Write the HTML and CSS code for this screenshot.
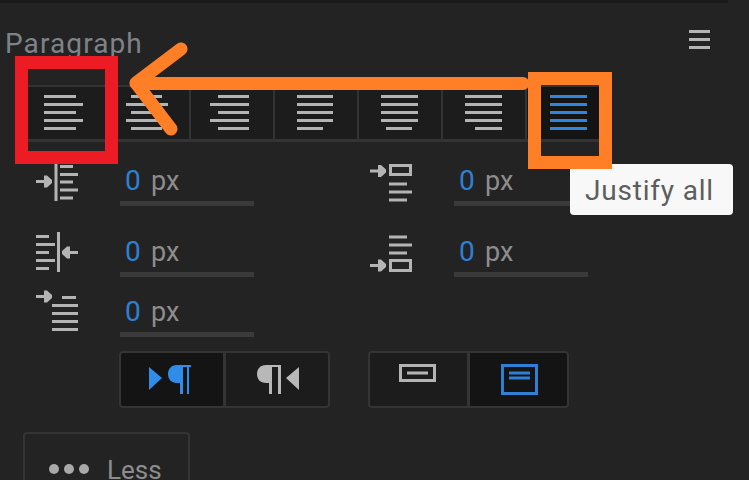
FILE: index.html
```html
<!DOCTYPE html>
<html lang="en">
<head>
<meta charset="utf-8">
<title>Paragraph</title>
<link rel="stylesheet" href="styles.css">
</head>
<body>
<div class="app">
  <div class="topbar"></div>
  <header class="header">
    <h1 class="title">Paragraph</h1>
    <button class="menu" aria-label="Panel menu"><span></span><span></span><span></span></button>
  </header>

  <div class="align-row">
    <div class="align-cell">
      <svg class="lines" viewBox="0 0 39 35"><path d="M0 1.5H32M0 9.5H39M0 17.5H32M0 25.5H39M0 33.5H32"/></svg>
    </div>
    <div class="align-cell">
      <svg class="lines" viewBox="0 0 42 35"><path d="M5 1.5H36M0 9.5H42M5 17.5H36M0 25.5H42M5 33.5H36"/></svg>
    </div>
    <div class="align-cell">
      <svg class="lines" viewBox="0 0 42 35"><path d="M8 1.5H39M0 9.5H39M8 17.5H39M0 25.5H39M8 33.5H39"/></svg>
    </div>
    <div class="align-cell">
      <svg class="lines" viewBox="0 0 36 35"><path d="M0 1.5H36M0 9.5H36M0 17.5H36M0 25.5H36M0 33.5H26"/></svg>
    </div>
    <div class="align-cell">
      <svg class="lines" viewBox="0 0 37 35"><path d="M0 1.5H37M0 9.5H37M0 17.5H37M0 25.5H37M5 33.5H31"/></svg>
    </div>
    <div class="align-cell">
      <svg class="lines" viewBox="0 0 37 35"><path d="M0 1.5H37M0 9.5H37M0 17.5H37M0 25.5H37M10 33.5H37"/></svg>
    </div>
    <div class="align-cell align-active">
      <svg class="lines lines-blue" viewBox="0 0 37 35"><path d="M0 1.5H37M0 9.5H37M0 17.5H37M0 25.5H37M0 33.5H37"/></svg>
    </div>
  </div>

  <div class="fields">
    <div class="field">
      <svg class="field-icon" viewBox="0 0 44 44"><path class="ln" d="M20 0V44M24 9.500H37M24 17.500H42M24 25H37M24 33H42M24 41H37"/><path class="ln" d="M0 24.500H10"/><path class="fill" d="M8 18.500H11L16 23V26L11 30.500H8Z"/></svg>
      <div class="value"><span class="num">0</span><span class="unit">px</span></div>
    </div>
    <div class="field">
      <svg class="field-icon" viewBox="0 0 44 44"><rect class="box" x="20.500" y="8.500" width="20" height="9"/><path class="ln" d="M0 14H10M19 27H37M19 35H42M19 43H37"/><path class="fill" d="M8 8H11L16 12.500V15.500L11 20H8Z"/></svg>
      <div class="value"><span class="num">0</span><span class="unit">px</span></div>
    </div>
    <div class="field">
      <svg class="field-icon" viewBox="0 0 44 44"><path class="ln" d="M0 8.500H13M0 16.500H19M0 24.500H13M0 32.500H19M0 40.500H13M22.500 4V44"/><path class="ln" d="M32 24.500H42"/><path class="fill" d="M34 18.500H31L26 23V26L31 30.500H34Z"/></svg>
      <div class="value"><span class="num">0</span><span class="unit">px</span></div>
    </div>
    <div class="field">
      <svg class="field-icon" viewBox="0 0 44 44"><path class="ln" d="M19 9H37M19 17H42M19 25H37"/><rect class="box" x="20.500" y="32.500" width="20" height="10"/><path class="ln" d="M0 37.500H10"/><path class="fill" d="M8 31.500H11L16 36V39L11 43.500H8Z"/></svg>
      <div class="value"><span class="num">0</span><span class="unit">px</span></div>
    </div>
    <div class="field">
      <svg class="field-icon" viewBox="0 0 44 44"><path class="ln" d="M0 8.500H10M26 9.500H40M16 17.500H42M16 25.500H42M16 33.500H42M16 41.500H42"/><path class="fill" d="M8 2.500H11L16 7V10L11 14.500H8Z"/></svg>
      <div class="value"><span class="num">0</span><span class="unit">px</span></div>
    </div>
  </div>

  <div class="toggles">
    <div class="group">
      <div class="group-cell group-active">
        <svg class="para para-left" viewBox="0 0 42 30"><path class="blue-fill" d="M0 3L13 14L0 26ZM31 1H42V3H40V30H38V3H34V30H31V19H28C22 19 19 15 19 10S22 1 28 1Z"/></svg>
      </div>
      <div class="group-cell">
        <svg class="para para-right" viewBox="0 0 42 30"><path class="gray-fill" d="M42 3L29 14L42 26ZM12 1H24V30H21V3H15V30H12V19H9C3 19 0 15 0 10S3 1 9 1Z"/></svg>
      </div>
    </div>
    <div class="group group-narrow">
      <div class="group-cell">
        <svg class="frame frame-left" viewBox="0 0 37 31"><path class="frame-gray" d="M1.500 1.500H35.500V16.500H1.500ZM8 9H29"/></svg>
      </div>
      <div class="group-cell group-active">
        <svg class="frame frame-right" viewBox="0 0 37 31"><path class="frame-blue" d="M1.500 1.500H35.500V29.500H1.500ZM8 9H29M8 14H29"/></svg>
      </div>
    </div>
  </div>

  <button class="less">
    <span class="dots"><i></i><i></i><i></i></span>
    <span class="less-label">Less</span>
  </button>

  <div class="tooltip">Justify all</div>

  <svg class="annotation" viewBox="0 0 749 480">
    <rect class="mark-red" x="21.500" y="62.500" width="90" height="95"/>
    <rect class="mark-orange" x="534.500" y="78.500" width="71" height="84"/>
    <path class="mark-arrow" d="M523 83.500H136M181 49L136 83L171 129"/>
  </svg>
</div>
</body>
</html>
```

FILE: styles.css
```css
* { box-sizing: border-box; }
html, body { margin: 0; padding: 0; background: #232323; }
.app {
  position: relative;
  width: 749px;
  height: 480px;
  overflow: hidden;
  background: #232323;
  font-family: "Roboto", "Liberation Sans", sans-serif;
}
.topbar { width: 728px; height: 3px; background: #1a1a1a; }

.header {
  height: 82px;
  display: flex;
  justify-content: space-between;
  align-items: flex-start;
  padding: 25px 39px 0 5px;
}
.title {
  margin: 0;
  font-size: 28px;
  line-height: 32px;
  font-weight: 400;
  letter-spacing: 1.1px;
  color: #7f8389;
}
.menu {
  display: flex;
  flex-direction: column;
  gap: 5px;
  width: 21px;
  margin-top: 2px;
  padding: 0;
  border: 0;
  background: none;
}
.menu span { display: block; height: 3px; background: #b4b4b4; }

.align-row {
  display: grid;
  grid-template-columns: repeat(7, 84px);
  width: 588px;
  height: 57px;
  margin-left: 23px;
  border-top: 2px solid #333;
  border-bottom: 3px solid #333;
}
.align-cell {
  display: flex;
  align-items: flex-start;
  justify-content: center;
  padding-top: 8px;
  background: #1c1c1c;
  border-right: 2px solid #333;
}
.align-active { background: #141414; border-right: 0; }
.lines { height: 35px; width: auto; display: block; margin-right: 2px; }
.lines path { fill: none; stroke: #b4b4b4; stroke-width: 3; }
.lines-blue path { stroke: #3086dc; }

.fields {
  display: grid;
  grid-template-columns: 334px 334px;
  grid-template-rows: 64px 71px 60px;
  align-items: end;
  padding-left: 36px;
}
.field { display: flex; align-items: flex-end; gap: 40px; }
.field-icon { width: 44px; height: 44px; margin-bottom: 5px; flex: none; overflow: visible; }
.field-icon .ln { fill: none; stroke: #b4b4b4; stroke-width: 3; }
.field-icon .box { fill: none; stroke: #b4b4b4; stroke-width: 3; }
.field-icon .fill { fill: #b4b4b4; }
.value {
  display: flex;
  align-items: baseline;
  width: 134px;
  height: 47px;
  padding: 2px 0 0 5px;
  border-bottom: 5px solid #3a3a3a;
  line-height: 40px;
}
.num { width: 26px; font-size: 28px; color: #2f7fd4; }
.unit { font-size: 27px; color: #8d8d8d; }

.toggles { display: flex; gap: 38px; margin: 14px 0 0 119px; }
.group {
  display: grid;
  grid-template-columns: 1fr 1fr;
  gap: 3px;
  width: 211px;
  height: 57px;
  background: #343434;
  border: 2px solid #343434;
  border-radius: 4px;
  overflow: hidden;
}
.group-narrow { width: 201px; }
.group-cell { display: flex; justify-content: center; padding-top: 11px; background: #1c1c1c; }
.group-active { background: #141414; }
.para { width: 42px; height: 30px; display: block; }
.para-left { margin-left: -4px; }
.para-right { margin-left: 2px; }
.blue-fill { fill: #2f8ce8; }
.gray-fill { fill: #b8b8b8; }
.frame { width: 37px; height: 31px; display: block; }
.frame-left { margin-left: -2px; }
.frame-right { margin-left: 2px; }
.frame-gray { fill: none; stroke: #b4b4b4; stroke-width: 3; }
.frame-blue { fill: none; stroke: #2f7fd4; stroke-width: 3; }

.less {
  display: flex;
  align-items: flex-start;
  gap: 18px;
  width: 167px;
  height: 70px;
  margin: 24px 0 0 23px;
  padding: 0 0 0 24px;
  background: #232323;
  border: 2px solid #343434;
  border-radius: 4px;
  font-family: inherit;
}
.dots { display: flex; gap: 5px; margin-top: 30px; }
.dots i { display: block; width: 10px; height: 10px; border-radius: 50%; background: #a8a8a8; }
.less-label { font-size: 26px; line-height: 30px; margin-top: 21px; color: #8d8d8d; }

.tooltip {
  position: absolute;
  left: 570px;
  top: 164px;
  width: 163px;
  height: 51px;
  padding-left: 15px;
  background: #f8f8f8;
  border-radius: 4px;
  color: #5d5d5d;
  font-size: 28px;
  line-height: 54px;
  letter-spacing: 0.8px;
}
.annotation { position: absolute; left: 0; top: 0; width: 749px; height: 480px; }
.mark-red { fill: none; stroke: #ed1c24; stroke-width: 13; }
.mark-orange { fill: none; stroke: #ff7f27; stroke-width: 13; }
.mark-arrow { fill: none; stroke: #ff7f27; stroke-width: 13; stroke-linecap: round; stroke-linejoin: round; }
```
